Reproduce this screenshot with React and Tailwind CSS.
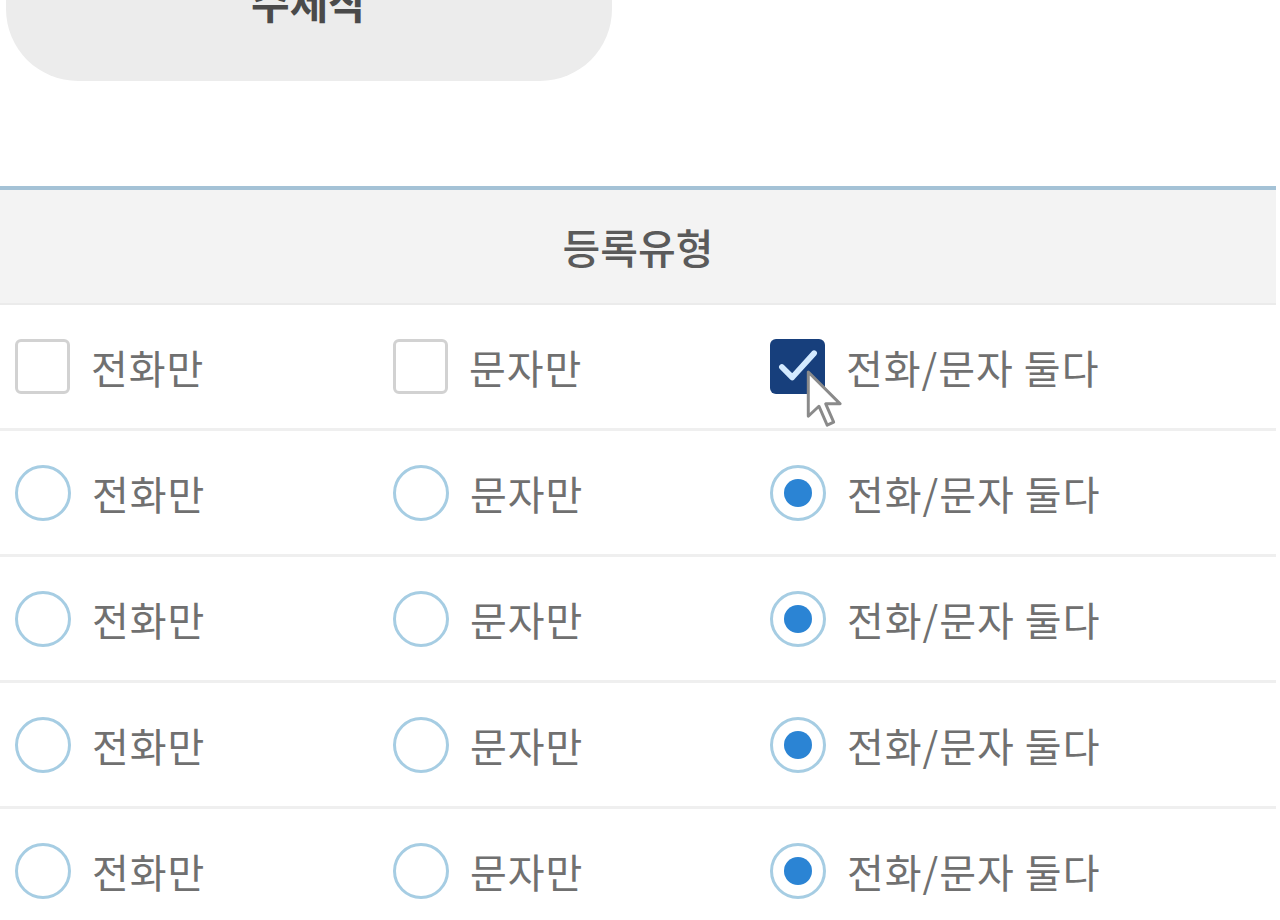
import { Fragment } from "react";

const OPTIONS = ["전화만", "문자만", "전화/문자 둘다"];

function Checkbox({ checked }) {
    if (checked) {
        return (
            <span className="w-[55px] h-[55px] shrink-0 rounded-[6px] bg-[#173f7c] flex items-center justify-center">
                <svg width="46" height="46" viewBox="0 0 40 40" fill="none">
                    <path d="M6 20 L15 29 L34 8" stroke="#d3eaff" strokeWidth="5" strokeLinecap="round" strokeLinejoin="round" />
                </svg>
            </span>
        );
    }
    return <span className="w-[55px] h-[55px] shrink-0 rounded-[6px] border-[3px] border-[#d2d2d2] bg-white" />;
}

function Radio({ checked }) {
    return (
        <span className="w-[56px] h-[56px] shrink-0 rounded-full border-[3px] border-[#a6cde3] bg-white flex items-center justify-center">
            {checked && <span className="w-[28px] h-[28px] rounded-full bg-[#2b84d4]" />}
        </span>
    );
}

function Row({ kind, showCursor }) {
    return (
        <div className="h-[126px] border-b-[3px] border-[#efefef] pl-[15px] grid grid-cols-[378px_377px_1fr] items-center">
            {OPTIONS.map((label, i) => {
                const checked = i === 2;
                return (
                    <div key={label} className="relative flex items-center gap-[21px]">
                        {kind === "check" ? <Checkbox checked={checked} /> : <Radio checked={checked} />}
                        <span className="text-[40px] leading-none text-[#707070] tracking-[1px]">{label}</span>
                        {showCursor && checked && (
                            <svg className="absolute left-[34px] top-[30px]" width="44" height="62" viewBox="0 0 14 21" fill="none">
                                <path d="M1 1 L1 16 L4.6 12.6 L7.4 19 L9.6 18 L6.9 11.8 L11.8 11.8 Z" fill="#ffffff" stroke="#8a8a8a" strokeWidth="1" strokeLinejoin="round" />
                            </svg>
                        )}
                    </div>
                );
            })}
        </div>
    );
}

export default function App() {
    return (
        <div className="w-[1280px] h-[920px] overflow-hidden bg-white font-['Noto_Sans_CJK_KR',sans-serif]">
            {/* top button (cut off by viewport) */}
            <div className="pl-[6px] w-[612px]">
                <div className="-mt-[80px] h-[161px] rounded-[72px] bg-[#ececec] flex items-center justify-center">
                    <span className="text-[42px] font-bold text-[#4a4a4a] leading-none">수제작</span>
                </div>
            </div>

            {/* table */}
            <div className="mt-[105px] w-[1276px] border-t-[4px] border-[#a4c2d6]">
                <div className="h-[115px] bg-[#f3f3f3] border-b-[2px] border-[#ebebeb] flex items-center justify-center">
                    <span className="text-[41px] text-[#5a5a5a] font-medium leading-none tracking-[0px]">등록유형</span>
                </div>
                {["check", "radio", "radio", "radio", "radio"].map((kind, i) => (
                    <Fragment key={i}>
                        <Row kind={kind} showCursor={i === 0} />
                    </Fragment>
                ))}
            </div>
        </div>
    );
}
